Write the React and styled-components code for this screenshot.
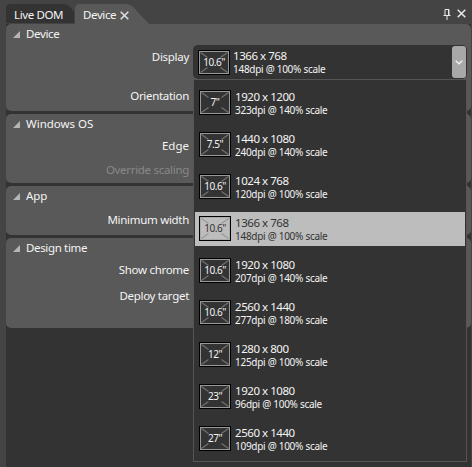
import React from "react";
import styled, { createGlobalStyle } from "styled-components";

const GlobalStyle = createGlobalStyle`
  * { box-sizing: border-box; }
  body {
    margin: 0;
    overflow: hidden;
    background: #444;
    font-family: "Noto Sans", "Open Sans", sans-serif;
    font-size: 11.5px;
    color: #f4f4f4;
  }
`;

const Window = styled.div`
  width: 472px;
  height: 467px;
  padding: 4px 1px 0 6px;
  display: flex;
  flex-direction: column;
  background: #444;
`;

const TabBar = styled.div`
  height: 20px;
  display: flex;
  flex: none;
`;

const Tab = styled.div`
  width: ${(p) => p.$width}px;
  margin-right: 1px;
  padding-left: 8px;
  display: flex;
  align-items: center;
  gap: 4px;
  line-height: 20px;
  padding-top: 2px;
  white-space: nowrap;
  letter-spacing: -0.38px;
  border-radius: 4px 0 0 0;
  background: ${(p) => (p.$active ? "#595959" : "#333")};
  clip-path: ${(p) =>
    p.$active
      ? "path('M0 20V4Q0 0 4 0H50Q56 0 60 5L74 20Z')"
      : "path('M0 19V4Q0 0 4 0H57Q62 0 65 4L68 8V19Z')"};
`;

const WindowButtons = styled.div`
  margin-left: auto;
  padding: 5px 5px 0 0;
  display: flex;
  align-items: flex-start;
  gap: 6px;
`;

const Glyph = styled.svg`
  display: block;
  flex: none;
`;

const Sections = styled.div`
  flex: 1;
  display: flex;
  flex-direction: column;
  gap: 3px;
  background: #333;
`;

const Panel = styled.section`
  height: ${(p) => p.$height}px;
  flex: none;
  border-radius: 5px;
  background: #595959;
`;

const PanelHeader = styled.h2`
  height: 20px;
  margin: 0;
  padding-left: 7px;
  display: flex;
  align-items: center;
  gap: 6px;
  font-size: 11.5px;
  font-weight: 400;
  line-height: 20px;
  letter-spacing: ${(p) => p.$spacing}px;
`;

const Field = styled.div`
  height: 18px;
  margin-top: ${(p) => p.$top}px;
  width: 183px;
  text-align: right;
  line-height: 18px;
  white-space: nowrap;
  letter-spacing: ${(p) => p.$spacing ?? -0.3}px;
  color: ${(p) => (p.$disabled ? "#888" : "#f4f4f4")};
`;

const ComboBox = styled.div`
  position: absolute;
  left: 193px;
  top: 45px;
  width: 274px;
`;

const ComboValue = styled.div`
  height: 34px;
  padding: 0 1px 0 5px;
  display: flex;
  align-items: center;
  border-radius: 5px;
  background: #333;
`;

const DropButton = styled.button`
  width: 14px;
  height: 32px;
  margin-left: auto;
  padding: 0;
  border: 0;
  border-radius: 3px;
  display: grid;
  place-items: center;
  background: #a8a8a8;
`;

const Menu = styled.ul`
  height: 383px;
  margin: 0;
  padding: 6px 1px 0;
  list-style: none;
  display: flex;
  flex-direction: column;
  gap: 8px;
  border: 1px solid #555;
  background: #333;
`;

const Option = styled.li`
  height: 34px;
  padding-left: 4px;
  display: flex;
  align-items: center;
  background: ${(p) => (p.$selected ? "#bdbdbd" : "transparent")};
  color: ${(p) => (p.$selected ? "#333" : "#f4f4f4")};
`;

const Thumb = styled.div`
  width: 32px;
  height: 25px;
  margin-bottom: ${(p) => (p.$combo ? -1 : 1)}px;
  flex: none;
  display: grid;
  border: 1px solid #000;

  > * { grid-area: 1 / 1; }
`;

const Size = styled.span`
  place-self: center;
  font-size: 10px;
  line-height: 13px;
  letter-spacing: -0.45px;
`;

const Specs = styled.div`
  margin: ${(p) => (p.$combo ? "1px 0 0 3px" : "0 0 0 4px")};
  white-space: nowrap;
`;

const Resolution = styled.div`
  font-size: 11.5px;
  line-height: 14px;
  letter-spacing: -0.45px;
`;

const Density = styled.div`
  font-size: 10px;
  line-height: 13px;
  letter-spacing: -0.28px;
`;

const devices = [
  ['7"', "1920 x 1200", "323dpi @ 140% scale"],
  ['7.5"', "1440 x 1080", "240dpi @ 140% scale"],
  ['10.6"', "1024 x 768", "120dpi @ 100% scale"],
  ['10.6"', "1366 x 768", "148dpi @ 100% scale"],
  ['10.6"', "1920 x 1080", "207dpi @ 140% scale"],
  ['10.6"', "2560 x 1440", "277dpi @ 180% scale"],
  ['12"', "1280 x 800", "125dpi @ 100% scale"],
  ['23"', "1920 x 1080", "96dpi @ 100% scale"],
  ['27"', "2560 x 1440", "109dpi @ 100% scale"],
];

const selectedIndex = 3;

function DeviceInfo({ device, combo, selected }) {
  const [size, resolution, density] = device;
  return (
    <>
      <Thumb $combo={combo}>
        <Glyph width="30" height="23" viewBox="0 0 30 23">
          <path
            d="M1.5 1.5L8.5 6.5M28.5 1.5L21.5 6.5M1.5 21.5L8.5 16.5M28.5 21.5L21.5 16.5"
            stroke={selected ? "#999" : "#707070"}
            strokeWidth="1.2"
            fill="none"
          />
          <rect x=".5" y=".5" width="29" height="22" fill="none" stroke={selected ? "#aaa" : "#999"} />
        </Glyph>
        <Size>{size}</Size>
      </Thumb>
      <Specs $combo={combo}>
        <Resolution>{resolution}</Resolution>
        <Density>{density}</Density>
      </Specs>
    </>
  );
}

function Cross({ size, color }) {
  return (
    <Glyph width={size} height={size} viewBox="0 0 9 9">
      <path d="M.7 .7L8.3 8.3M8.3 .7L.7 8.3" stroke={color} strokeWidth="1.5" />
    </Glyph>
  );
}

function Section({ title, height, spacing = -0.35, children }) {
  return (
    <Panel $height={height}>
      <PanelHeader $spacing={spacing}>
        <Glyph width="7" height="7" viewBox="0 0 7 7">
          <path d="M7 0V7H0Z" fill="#b5b5b5" />
        </Glyph>
        {title}
      </PanelHeader>
      {children}
    </Panel>
  );
}

export default function App() {
  return (
    <Window>
      <GlobalStyle />
      <TabBar>
        <Tab $width={68}>Live DOM</Tab>
        <Tab $width={74} $active>
          Device
          <Cross size={9} color="#e0e0e0" />
        </Tab>
        <WindowButtons>
          <Glyph width="8" height="11" viewBox="0 0 8 11">
            <path d="M2 .5H6V6.5H2ZM5.5 1V6M.5 6.5H7.5M4 7V11" fill="none" stroke="#e8e8e8" />
          </Glyph>
          <Cross size={9} color="#e8e8e8" />
        </WindowButtons>
      </TabBar>
      <Sections>
        <Section title="Device" height={87}>
          <Field $top={4}>Display</Field>
          <Field $top={21}>Orientation</Field>
        </Section>
        <Section title="Windows OS" height={69} spacing={0}>
          <Field $top={3} $spacing={0}>Edge</Field>
          <Field $top={6} $disabled>Override scaling</Field>
        </Section>
        <Section title="App" height={49} spacing={-0.1}>
          <Field $top={5}>Minimum width</Field>
        </Section>
        <Section title="Design time" height={90}>
          <Field $top={3}>Show chrome</Field>
          <Field $top={8}>Deploy target</Field>
        </Section>
      </Sections>
      <ComboBox>
        <ComboValue>
          <DeviceInfo device={devices[selectedIndex]} combo />
          <DropButton aria-label="Choose display">
            <Glyph width="8" height="5" viewBox="0 0 8 5">
              <path d="M.7 .8L4 3.7L7.3 .8" fill="none" stroke="#f4f4f4" strokeWidth="1.4" />
            </Glyph>
          </DropButton>
        </ComboValue>
        <Menu>
          {devices.map((device, i) => (
            <Option key={i} $selected={i === selectedIndex}>
              <DeviceInfo device={device} selected={i === selectedIndex} />
            </Option>
          ))}
        </Menu>
      </ComboBox>
    </Window>
  );
}
